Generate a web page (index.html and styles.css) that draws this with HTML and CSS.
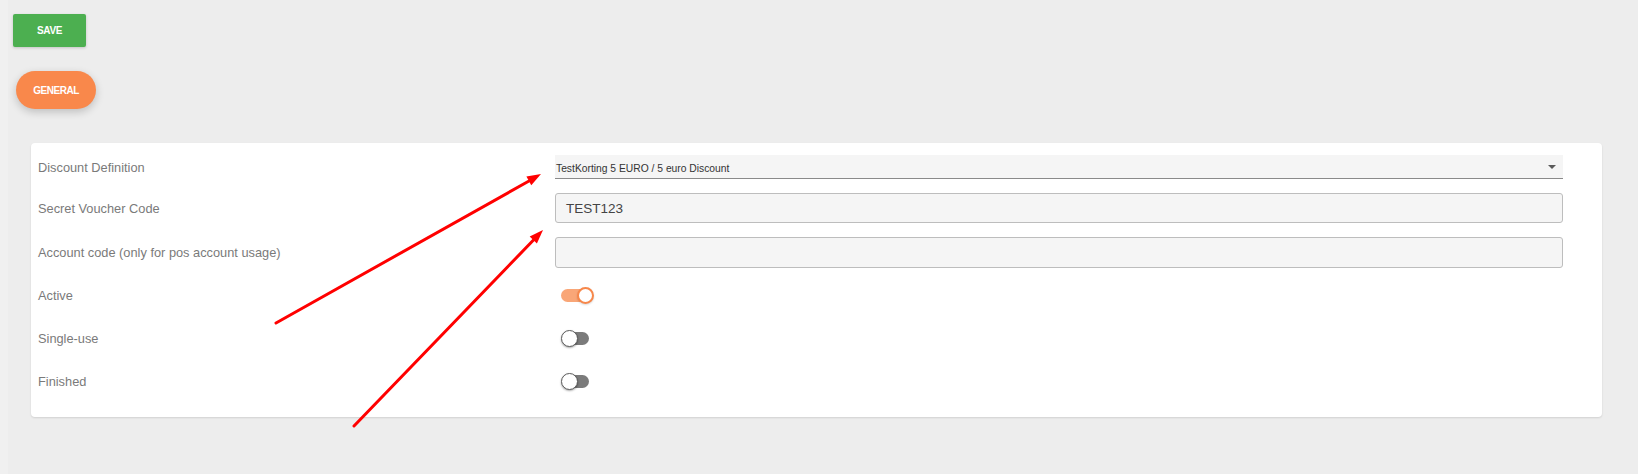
FILE: index.html
```html
<!DOCTYPE html>
<html lang="en">
<head>
<meta charset="utf-8">
<title>Voucher</title>
<link rel="stylesheet" href="styles.css">
</head>
<body>
<div class="page">
  <div class="toolbar">
    <button class="btn-save">SAVE</button>
  </div>
  <div class="tabs">
    <button class="tab-general">GENERAL</button>
  </div>
  <div class="card">
    <div class="fields">
      <div class="row">
        <label class="label">Discount Definition</label>
        <div class="select">
          <span class="select-text">TestKorting 5 EURO / 5 euro Discount</span>
          <span class="caret"></span>
        </div>
      </div>
      <div class="row">
        <label class="label">Secret Voucher Code</label>
        <div class="input input-a">TEST123</div>
      </div>
      <div class="row">
        <label class="label">Account code (only for pos account usage)</label>
        <div class="input input-b"></div>
      </div>
    </div>
    <div class="toggles">
      <div class="row toggle-row">
        <label class="label">Active</label>
        <div class="switch on"><span class="track"></span><span class="knob"></span></div>
      </div>
      <div class="row toggle-row">
        <label class="label">Single-use</label>
        <div class="switch"><span class="track"></span><span class="knob"></span></div>
      </div>
      <div class="row toggle-row">
        <label class="label">Finished</label>
        <div class="switch"><span class="track"></span><span class="knob"></span></div>
      </div>
    </div>
  </div>
  <svg class="annotations" width="1638" height="474" viewBox="0 0 1638 474" xmlns="http://www.w3.org/2000/svg">
    <line x1="276" y1="323" x2="529" y2="181" stroke="#ff0000" stroke-width="3" stroke-linecap="round"/>
    <polygon points="541,174 531.3,185.2 526.4,176.5" fill="#ff0000"/>
    <line x1="354" y1="426" x2="533.5" y2="240" stroke="#ff0000" stroke-width="3" stroke-linecap="round"/>
    <polygon points="543,230 536.9,243.6 529.7,236.6" fill="#ff0000"/>
  </svg>
</div>
</body>
</html>
```

FILE: styles.css
```css
* { box-sizing: border-box; }

html, body {
  margin: 0;
  padding: 0;
  background: #ededed;
  font-family: "Liberation Sans", Arial, sans-serif;
}

.page {
  position: relative;
  width: 1638px;
  height: 474px;
  border-left: 8px solid #f0f0f0;
  padding-top: 14px;
  overflow: hidden;
}

.toolbar {
  padding-left: 5px;
}

.btn-save {
  display: block;
  width: 73px;
  height: 33px;
  border: none;
  border-radius: 2px;
  background: #4caf50;
  color: #fff;
  font-family: "Liberation Sans", Arial, sans-serif;
  font-size: 10px;
  font-weight: bold;
  letter-spacing: -0.4px;
  padding: 0;
  box-shadow: 0 1px 3px rgba(0,0,0,0.18);
}

.tabs {
  margin-top: 24px;
  padding-left: 8px;
}

.tab-general {
  display: block;
  width: 80px;
  height: 38px;
  border: none;
  border-radius: 19px;
  background: #f9884b;
  color: #fff;
  font-family: "Liberation Sans", Arial, sans-serif;
  font-size: 10px;
  font-weight: bold;
  letter-spacing: -0.45px;
  padding: 0;
  box-shadow: 0 3px 8px rgba(0,0,0,0.2);
}

.card {
  margin: 34px 36px 0 23px;
  height: 274px;
  background: #fff;
  border-radius: 4px;
  box-shadow: 0 1px 2px rgba(0,0,0,0.12);
  padding: 12px 39px 0 7px;
}

.fields {
  display: flex;
  flex-direction: column;
  gap: 14px;
}

.row {
  display: grid;
  grid-template-columns: 517px 1fr;
  align-items: center;
}

.label {
  font-size: 12.8px;
  color: #7a7a7a;
}

.select {
  position: relative;
  height: 24px;
  background: #f5f5f5;
  border-bottom: 1px solid #8a8a8a;
  display: flex;
  align-items: center;
}

.select-text {
  font-size: 10.3px;
  color: #333;
  padding-left: 1px;
  padding-top: 3px;
}

.caret {
  position: absolute;
  right: 7px;
  top: 10px;
  width: 0;
  height: 0;
  border-left: 4px solid transparent;
  border-right: 4px solid transparent;
  border-top: 4px solid #5a5a5a;
}

.input {
  background: #f5f5f5;
  border: 1px solid #bdbdbd;
  border-radius: 3px;
  font-size: 13.5px;
  color: #444;
  padding-left: 10px;
  display: flex;
  align-items: center;
}

.input-a { height: 30px; }
.input-b { height: 31px; }

.toggles {
  margin-top: 6px;
}

.toggle-row {
  height: 43px;
}

.switch {
  position: relative;
  width: 33px;
  height: 17px;
  margin-left: 6px;
}

.track {
  position: absolute;
  left: 2px;
  top: 2px;
  width: 26px;
  height: 13px;
  border-radius: 7px;
  background: #7b7b7b;
}

.knob {
  position: absolute;
  left: 0;
  top: 0;
  width: 17px;
  height: 17px;
  border-radius: 50%;
  background: #fff;
  border: 1.5px solid #5c5c5c;
  box-shadow: 0 1px 2px rgba(0,0,0,0.35);
}

.switch.on .track {
  left: 0;
  width: 30px;
  background: #f9a677;
}

.switch.on .knob {
  left: 16px;
  border: 2px solid #f7874a;
  box-shadow: 0 1px 2px rgba(0,0,0,0.15);
}

.annotations {
  position: absolute;
  left: -8px;
  top: 0;
  pointer-events: none;
}
```
